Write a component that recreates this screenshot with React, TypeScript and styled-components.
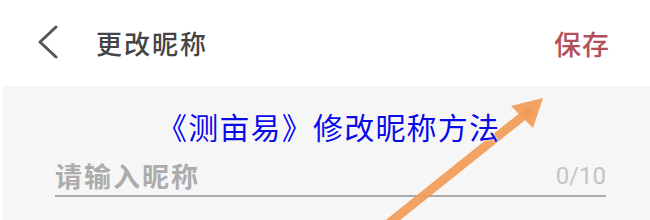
import React from "react";
import styled, { createGlobalStyle } from "styled-components";

const Global = createGlobalStyle`
  html, body { margin: 0; padding: 0; background: #ffffff; }
  body { font-family: "Noto Sans CJK SC", "Noto Sans", sans-serif; }
`;

const Page = styled.div`
  position: relative;
  width: 650px;
  height: 220px;
  overflow: hidden;
  background: #ffffff;
  display: flex;
  flex-direction: column;
`;

const Header = styled.header`
  height: 86px;
  display: flex;
  align-items: center;
  padding: 0 40px 0 36px;
  background: #ffffff;
`;

const Back = styled.button`
  border: 0;
  background: none;
  padding: 0;
  width: 24px;
  height: 34px;
  display: flex;
  margin-top: -2px;
`;

const Title = styled.h1`
  margin: 0 0 0 36px;
  font-size: 26px;
  font-weight: 500;
  color: #444444;
  letter-spacing: 2px;
  flex: 1;
  line-height: 1;
`;

const Save = styled.span`
  font-size: 27px;
  color: #b3505a;
  font-weight: 500;
  letter-spacing: 1px;
  line-height: 1;
`;

const Body = styled.main`
  flex: 1;
  background: #f6f6f6;
  margin-left: 3px;
  padding: 0 44px 0 52px;
  display: flex;
  flex-direction: column;
`;

const Field = styled.div`
  margin-top: 76px;
  display: flex;
  align-items: flex-end;
  justify-content: space-between;
  border-bottom: 2px solid #ababab;
  padding-bottom: 6px;
`;

const Placeholder = styled.span`
  font-size: 27px;
  font-weight: 700;
  color: #acacac;
  letter-spacing: 2px;
  line-height: 1;
`;

const Counter = styled.span`
  font-family: Roboto, "Liberation Sans", sans-serif;
  font-size: 24px;
  color: #c4c4c4;
  line-height: 1;
  margin-bottom: 1px;
`;

const Caption = styled.div`
  position: absolute;
  left: 157px;
  top: 108px;
  font-size: 30px;
  line-height: 1.2;
  color: #0a0ae8;
  letter-spacing: 1.2px;
  text-shadow: 0 0 2px #fff, 0 0 2px #fff;
`;

const Arrow = styled.svg`
  position: absolute;
  left: 0;
  top: 0;
  pointer-events: none;
`;

export default function App() {
  return (
    <Page>
      <Global />
      <Header>
        <Back aria-label="back">
          <svg width="24" height="34" viewBox="0 0 24 34">
            <path d="M20 2 L4 17 L20 32" fill="none" stroke="#555" strokeWidth="3" strokeLinecap="round" strokeLinejoin="round" />
          </svg>
        </Back>
        <Title>更改昵称</Title>
        <Save>保存</Save>
      </Header>
      <Body>
        <Field>
          <Placeholder>请输入昵称</Placeholder>
          <Counter>0/10</Counter>
        </Field>
      </Body>
      <Arrow width="650" height="220" viewBox="0 0 650 220">
        <path d="M388 224 L528 112" stroke="#f19a55" strokeWidth="9" strokeLinecap="round" fill="none" opacity="0.92" />
        <path d="M543 98 L511 106 L533 128 Z" fill="#f19a55" opacity="0.92" />
      </Arrow>
      <Caption>《测亩易》修改昵称方法</Caption>
    </Page>
  );
}
